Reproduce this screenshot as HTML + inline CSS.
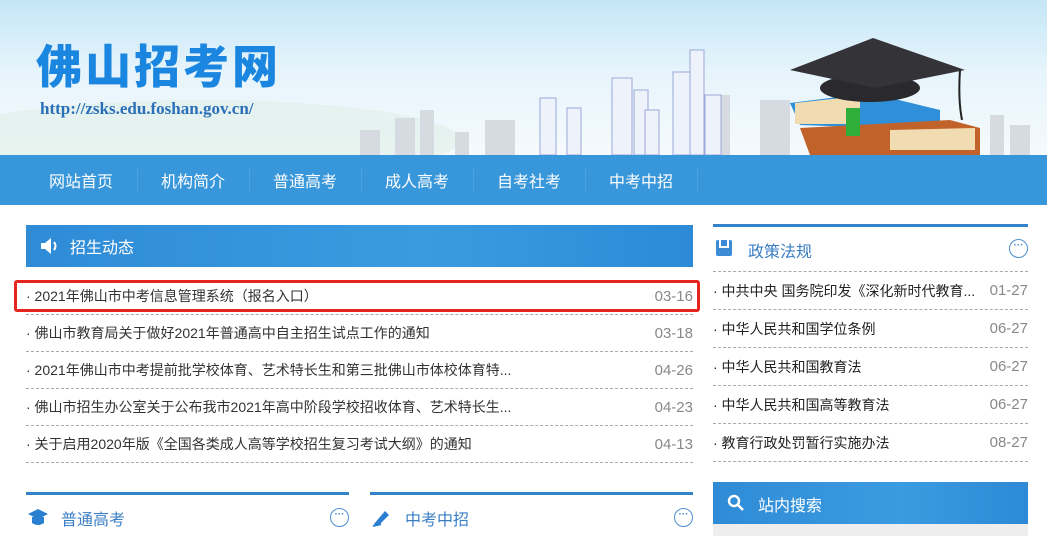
<!DOCTYPE html>
<html><head><meta charset="utf-8">
<style>
*{margin:0;padding:0;box-sizing:border-box}
body{width:1047px;height:536px;overflow:hidden;background:#fff;font-family:"Liberation Sans","Noto Sans CJK SC",sans-serif;position:relative}
.hdr{position:absolute;left:0;top:0;width:1047px;height:155px;background:linear-gradient(180deg,#c4e6f7 0%,#e6f4fb 45%,#f5fafd 100%);overflow:hidden}
.logo{position:absolute;left:36px;top:34px;font-size:46px;line-height:60px;font-weight:900;color:#1a86e0;letter-spacing:3px;font-family:"Noto Sans CJK SC",sans-serif}
.url{position:absolute;left:40px;top:99px;font:bold 17px "Liberation Serif",serif;color:#2a6fb8}
.nav{position:absolute;left:0;top:155px;width:1047px;height:50px;background:#3896db}
.nav span{position:absolute;top:13px;color:#fff;font-size:16px}
.nav i{position:absolute;top:13px;height:24px;border-left:1px dotted #5aaae3}
.bar{position:absolute;background:linear-gradient(90deg,#2f8bd6,#3b9be0 60%,#2d8ad6);color:#fff}
.row{position:absolute;font-size:14px;color:#333;height:37px;line-height:37px;border-bottom:1px dashed #aaa}
.row .d{position:absolute;right:0;top:0;color:#888;font-size:15px}
.sec{position:absolute;border-top:3px solid #3283c9}
.more{position:absolute;width:19px;height:19px;border:1px solid #4a8fd0;border-radius:50%;color:#4a8fd0;font-size:10px;text-align:center;line-height:12px;font-weight:bold}
</style></head><body>
<div class="hdr">
 <svg width="1047" height="155" style="position:absolute;left:0;top:0">
  <ellipse cx="200" cy="140" rx="260" ry="40" fill="#dfeee6" opacity=".6"/>
  <g fill="#d6dbe2"><rect x="360" y="130" width="20" height="25"/><rect x="395" y="118" width="20" height="37"/><rect x="420" y="110" width="14" height="45"/><rect x="455" y="132" width="14" height="23"/><rect x="485" y="120" width="30" height="35"/><rect x="700" y="95" width="30" height="60"/><rect x="760" y="100" width="30" height="55"/><rect x="990" y="115" width="14" height="40"/><rect x="1010" y="125" width="20" height="30"/></g>
  <g fill="#eef2fb" stroke="#9aa9d8" stroke-width="1"><rect x="540" y="98" width="16" height="57"/><rect x="567" y="108" width="14" height="47"/><rect x="612" y="78" width="20" height="77"/><rect x="634" y="90" width="14" height="65"/><rect x="645" y="110" width="14" height="45"/><rect x="673" y="72" width="20" height="83"/><rect x="690" y="50" width="14" height="105"/><rect x="705" y="95" width="16" height="60"/></g>
  <path d="M790 103 L870 93 L940 110 L940 130 L800 125 Z" fill="#2f8fd8"/>
  <path d="M795 103 L860 96 L860 124 L795 124 Z" fill="#f0dcb0"/>
  <path d="M800 128 L950 120 L980 128 L980 155 L810 155 Z" fill="#c0622a"/>
  <path d="M890 130 L975 128 L975 150 L890 150 Z" fill="#f0dcb0"/>
  <rect x="846" y="108" width="14" height="28" fill="#2fae3a"/>
  <ellipse cx="870" cy="88" rx="50" ry="14" fill="#2a2a2e"/>
  <path d="M790 70 L873 38 L965 70 L875 88 Z" fill="#333338"/>
  <path d="M960 70 Q958 100 962 120" stroke="#222" stroke-width="2" fill="none"/>
 </svg>
 <div class="logo">佛山招考网</div>
 <div class="url">http://zsks.edu.foshan.gov.cn/</div>
</div>
<div class="nav">
 <span style="left:49px">网站首页</span><i style="left:137px"></i>
 <span style="left:161px">机构简介</span><i style="left:249px"></i>
 <span style="left:273px">普通高考</span><i style="left:361px"></i>
 <span style="left:385px">成人高考</span><i style="left:473px"></i>
 <span style="left:497px">自考社考</span><i style="left:585px"></i>
 <span style="left:609px">中考中招</span><i style="left:697px"></i>
</div>

<div class="bar" style="left:26px;top:225px;width:667px;height:42px">
 <svg width="20" height="18" style="position:absolute;left:14px;top:12px"><path d="M1 6h4l6-5v16l-6-5H1z" fill="#fff"/><path d="M14 5q3 4 0 8" stroke="#fff" stroke-width="2" fill="none"/></svg>
 <span style="position:absolute;left:44px;top:9px;font-size:16px">招生动态</span>
</div>
<div class="row" style="left:26px;top:278px;width:667px"><span>· 2021年佛山市中考信息管理系统（报名入口）</span><span class="d">03-16</span></div>
<div class="row" style="left:26px;top:315px;width:667px"><span>· 佛山市教育局关于做好2021年普通高中自主招生试点工作的通知</span><span class="d">03-18</span></div>
<div class="row" style="left:26px;top:352px;width:667px"><span>· 2021年佛山市中考提前批学校体育、艺术特长生和第三批佛山市体校体育特...</span><span class="d">04-26</span></div>
<div class="row" style="left:26px;top:389px;width:667px"><span>· 佛山市招生办公室关于公布我市2021年高中阶段学校招收体育、艺术特长生...</span><span class="d">04-23</span></div>
<div class="row" style="left:26px;top:426px;width:667px"><span>· 关于启用2020年版《全国各类成人高等学校招生复习考试大纲》的通知</span><span class="d">04-13</span></div>
<div style="position:absolute;left:14px;top:280px;width:686px;height:32px;border:3px solid #e5261f;border-radius:3px"></div>

<div class="sec" style="left:26px;top:492px;width:323px;height:44px">
 <svg width="22" height="20" style="position:absolute;left:1px;top:12px"><path d="M1 7L11 2L21 7L11 12Z" fill="#2a7fd0"/><path d="M5 10v6q6 4 12 0v-6" fill="#2a7fd0"/></svg>
 <span style="position:absolute;left:35px;top:11px;font-size:16px;color:#3a7ec4">普通高考</span>
 <div class="more" style="right:0;top:13px">···</div>
</div>
<div class="sec" style="left:370px;top:492px;width:323px;height:44px">
 <svg width="22" height="20" style="position:absolute;left:1px;top:12px"><path d="M3 17L14 4l4 4L7 19z" fill="#2a7fd0"/><path d="M2 19l8-2" stroke="#2a7fd0" stroke-width="2"/></svg>
 <span style="position:absolute;left:35px;top:11px;font-size:16px;color:#3a7ec4">中考中招</span>
 <div class="more" style="right:0;top:13px">···</div>
</div>

<div class="sec" style="left:713px;top:224px;width:315px;height:48px;border-bottom:1px dashed #aaa">
 <svg width="16" height="16" style="position:absolute;left:3px;top:13px"><rect x="0" y="0" width="16" height="16" rx="2" fill="#3a8ad6"/><rect x="3" y="0" width="10" height="8" fill="#fff"/><rect x="5" y="0" width="6" height="6" fill="#3a8ad6"/></svg>
 <span style="position:absolute;left:35px;top:11px;font-size:16px;color:#3a7ec4">政策法规</span>
 <div class="more" style="right:0;top:12px">···</div>
</div>
<div class="row" style="left:713px;top:272px;width:315px;height:38px;line-height:38px;color:#222"><span>· 中共中央 国务院印发《深化新时代教育...</span><span class="d">01-27</span></div>
<div class="row" style="left:713px;top:310px;width:315px;height:38px;line-height:38px;color:#222"><span>· 中华人民共和国学位条例</span><span class="d">06-27</span></div>
<div class="row" style="left:713px;top:348px;width:315px;height:38px;line-height:38px;color:#222"><span>· 中华人民共和国教育法</span><span class="d">06-27</span></div>
<div class="row" style="left:713px;top:386px;width:315px;height:38px;line-height:38px;color:#222"><span>· 中华人民共和国高等教育法</span><span class="d">06-27</span></div>
<div class="row" style="left:713px;top:424px;width:315px;height:38px;line-height:38px;color:#222"><span>· 教育行政处罚暂行实施办法</span><span class="d">08-27</span></div>

<div class="bar" style="left:713px;top:482px;width:315px;height:42px">
 <svg width="18" height="18" style="position:absolute;left:14px;top:12px"><circle cx="7" cy="7" r="5" stroke="#fff" stroke-width="2.4" fill="none"/><path d="M11 11l5 5" stroke="#fff" stroke-width="2.6"/></svg>
 <span style="position:absolute;left:45px;top:10px;font-size:16px">站内搜索</span>
</div>
<div style="position:absolute;left:713px;top:524px;width:315px;height:12px;background:#eee"></div>
</body></html>
